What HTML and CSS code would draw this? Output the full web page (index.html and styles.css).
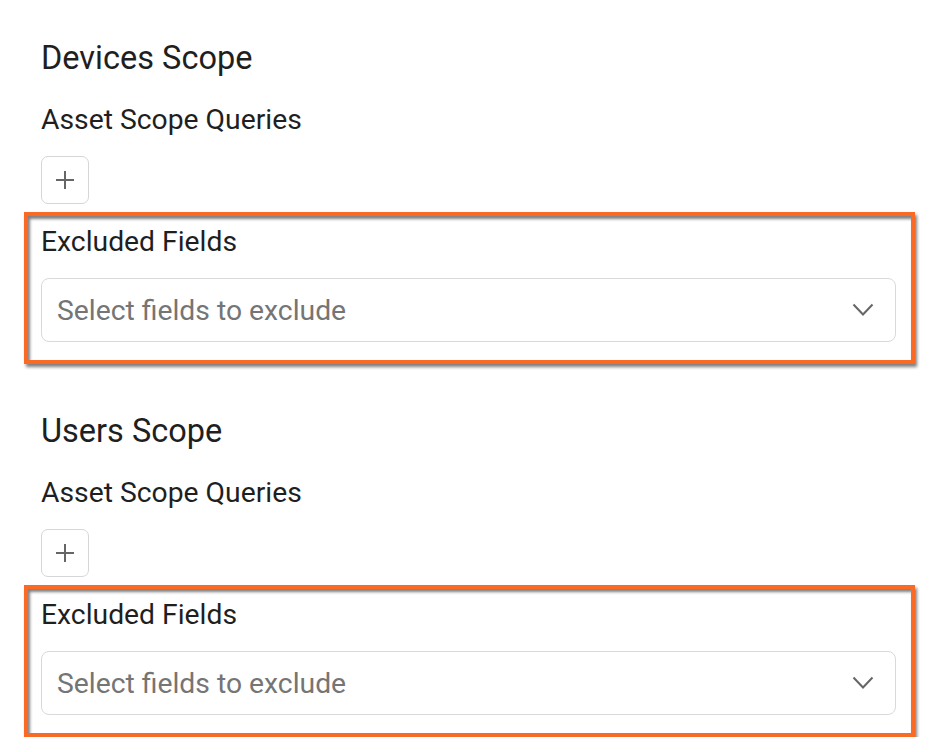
FILE: index.html
```html
<!DOCTYPE html>
<html>
<head>
<meta charset="utf-8">
<link rel="stylesheet" href="styles.css">
</head>
<body>
<div class="page">
  <section class="scope">
    <h2 class="scope-title">Devices Scope</h2>
    <div class="field-label">Asset Scope Queries</div>
    <button class="add-btn" type="button" aria-label="Add">
      <svg width="20" height="20" viewBox="0 0 20 20"><path d="M10 1v18M1 10h18" stroke="#666" stroke-width="2" fill="none"/></svg>
    </button>
    <div class="highlight">
      <div class="field-label">Excluded Fields</div>
      <div class="select">
        <span class="placeholder">Select fields to exclude</span>
        <svg class="chevron" width="22" height="14" viewBox="0 0 22 14"><path d="M1.5 1.5L11 11.5L20.5 1.5" stroke="#666" stroke-width="2" fill="none"/></svg>
      </div>
    </div>
  </section>
  <section class="scope second">
    <h2 class="scope-title">Users Scope</h2>
    <div class="field-label">Asset Scope Queries</div>
    <button class="add-btn" type="button" aria-label="Add">
      <svg width="20" height="20" viewBox="0 0 20 20"><path d="M10 1v18M1 10h18" stroke="#666" stroke-width="2" fill="none"/></svg>
    </button>
    <div class="highlight">
      <div class="field-label">Excluded Fields</div>
      <div class="select">
        <span class="placeholder">Select fields to exclude</span>
        <svg class="chevron" width="22" height="14" viewBox="0 0 22 14"><path d="M1.5 1.5L11 11.5L20.5 1.5" stroke="#666" stroke-width="2" fill="none"/></svg>
      </div>
    </div>
  </section>
</div>
</body>
</html>
```
FILE: styles.css
```css
html, body {
  margin: 0;
  padding: 0;
  background: #ffffff;
}
body {
  font-family: Roboto, "Liberation Sans", Arial, sans-serif;
  color: #1f1f1f;
}
.page {
  padding: 40px 21px 0 24px;
}
.scope {
  display: flex;
  flex-direction: column;
  align-items: flex-start;
}
.scope.second {
  margin-top: 49px;
}
.scope-title {
  margin: 0 0 0 17px;
  font-size: 32.5px;
  line-height: 36px;
  font-weight: 400;
}
.field-label {
  font-size: 28.3px;
  line-height: 32px;
  font-weight: 400;
}
.scope > .field-label {
  margin: 28px 0 0 17px;
}
.add-btn {
  margin: 20px 0 0 17px;
  width: 48px;
  height: 48px;
  padding: 0;
  border: 1px solid #d6d6d6;
  border-radius: 7px;
  background: #ffffff;
  display: flex;
  align-items: center;
  justify-content: center;
}
.highlight {
  align-self: stretch;
  margin-top: 8px;
  border: 4px solid #fb6a24;
  padding: 10px 15px 18px 13px;
  box-shadow: 2px 3px 3px rgba(0, 0, 0, 0.5), inset 2px 3px 3px rgba(0, 0, 0, 0.5);
}
.select {
  margin-top: 20px;
  height: 64px;
  box-sizing: border-box;
  border: 1px solid #d9d9d9;
  border-radius: 8px;
  display: flex;
  align-items: center;
  justify-content: space-between;
  padding: 0 21px 0 15px;
}
.placeholder {
  font-size: 28.3px;
  color: #757575;
}
.chevron {
  display: block;
}
```
